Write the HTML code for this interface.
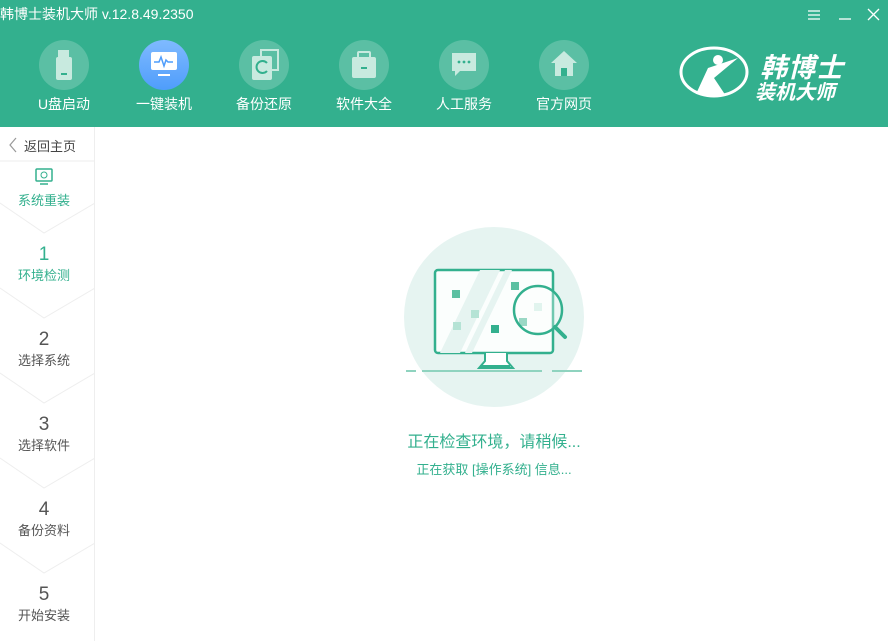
<!DOCTYPE html>
<html><head><meta charset="utf-8"><style>
*{margin:0;padding:0;box-sizing:border-box}
body{width:888px;height:641px;overflow:hidden;background:#fff;font-family:"Liberation Sans","Noto Sans CJK SC",sans-serif;position:relative}
.hd{position:absolute;left:0;top:0;width:888px;height:127px;background:#33b08e}
.title{position:absolute;left:0;top:4px;color:#fff;font-size:14px}
.nav{position:absolute;top:40px;width:100px;text-align:center;color:#fff;font-size:14px}
.nav .c{width:50px;height:50px;border-radius:50%;background:rgba(255,255,255,.2);margin:0 auto;position:relative}
.nav .t{margin-top:4px}
.side{position:absolute;left:0;top:127px;width:95px;height:514px;background:#fff;border-right:1px solid #eee}
.st{position:absolute;left:0;width:88px;text-align:center;color:#555;font-size:13px}
.st .n{font-size:19px;line-height:20px}
</style></head><body>
<div class="hd">
<div class="title">韩博士装机大师 v.12.8.49.2350</div>
<svg style="position:absolute;left:806px;top:8px" width="80" height="14"><g stroke="#fff" stroke-width="1.3" fill="none"><path d="M2 3h12M2 7h12M2 11h12"/><path d="M33 11h12"/><path d="M62 1l11 11M73 1l-11 11"/></g></svg>
<div class="nav" style="left:14px"><div class="c"><svg width="50" height="50"><rect x="19" y="10" width="11" height="8" fill="#c8eadf"/><rect x="17" y="17" width="16" height="23" rx="2" fill="#c8eadf"/><rect x="22" y="33" width="6" height="2" fill="#33b08e"/></svg></div><div class="t">U盘启动</div></div>
<div class="nav" style="left:114px"><div class="c" style="background:linear-gradient(#7fbaff,#4f9dfb)"><svg width="50" height="50"><rect x="12" y="12" width="26" height="18" rx="2" fill="#fff"/><path d="M15 22h5l2-5 3 9 2-6 2 2h5" stroke="#4f9dfb" stroke-width="1.5" fill="none"/><rect x="19" y="34" width="12" height="2" fill="#fff"/></svg></div><div class="t">一键装机</div></div>
<div class="nav" style="left:214px"><div class="c"><svg width="50" height="50"><rect x="22" y="10" width="17" height="20" fill="none" stroke="#c8eadf" stroke-width="2"/><rect x="13" y="16" width="20" height="24" rx="2" fill="#c8eadf"/><path d="M28 23a6 6 0 1 0 0 8" stroke="#33b08e" stroke-width="2" fill="none"/></svg></div><div class="t">备份还原</div></div>
<div class="nav" style="left:314px"><div class="c"><svg width="50" height="50"><rect x="19" y="12" width="12" height="6" rx="1" fill="none" stroke="#c8eadf" stroke-width="2"/><rect x="13" y="17" width="24" height="21" rx="2" fill="#c8eadf"/><rect x="22" y="27" width="6" height="2" fill="#33b08e"/></svg></div><div class="t">软件大全</div></div>
<div class="nav" style="left:414px"><div class="c"><svg width="50" height="50"><path d="M13 13h24v18H21l-5 5v-5h-3z" fill="#c8eadf"/><circle cx="20" cy="22" r="1.4" fill="#33b08e"/><circle cx="25" cy="22" r="1.4" fill="#33b08e"/><circle cx="30" cy="22" r="1.4" fill="#33b08e"/></svg></div><div class="t">人工服务</div></div>
<div class="nav" style="left:514px"><div class="c"><svg width="50" height="50"><path d="M25 11l-13 12h4v13h18V23h4z" fill="#c8eadf"/><rect x="22" y="28" width="6" height="8" fill="#33b08e"/></svg></div><div class="t">官方网页</div></div>
<svg style="position:absolute;left:678px;top:44px" width="80" height="56"><ellipse cx="36" cy="28" rx="33" ry="24" fill="none" stroke="#fff" stroke-width="3"/><circle cx="40" cy="16" r="5" fill="#fff"/><path d="M18 50 L30 24 L60 14 L36 34 L48 52 Z" fill="#fff"/></svg>
<div style="position:absolute;left:760px;top:46px;color:#fff;font-size:27px;font-style:italic;font-weight:bold;letter-spacing:1px">韩博士</div>
<div style="position:absolute;left:755px;top:76px;color:#fff;font-size:20px;font-style:italic;font-weight:bold">装机大师</div>
</div>
<div class="side">
<svg style="position:absolute;left:0;top:0" width="95" height="514"><g stroke="#eee" fill="none"><path d="M0 34h95"/><path d="M0 76L44 106L95 76M0 161L44 191L95 161M0 246L44 276L95 246M0 331L44 361L95 331M0 416L44 446L95 416"/></g><path d="M16 11l-6 7 6 7" stroke="#999" fill="none" stroke-width="1.2"/><rect x="36" y="42" width="16" height="12" rx="1" fill="none" stroke="#33b08e" stroke-width="1.5"/><path d="M40 57h8" stroke="#33b08e" stroke-width="1.5"/><circle cx="44" cy="48" r="3" fill="none" stroke="#33b08e"/></svg>
<div style="position:absolute;left:24px;top:9px;font-size:13px;color:#444">返回主页</div>
<div class="st" style="top:63px;left:0;color:#33b08e">系统重装</div>
<div class="st" style="top:118px;color:#33b08e"><div class="n">1</div>环境检测</div>
<div class="st" style="top:203px"><div class="n">2</div>选择系统</div>
<div class="st" style="top:288px"><div class="n">3</div>选择软件</div>
<div class="st" style="top:373px"><div class="n">4</div>备份资料</div>
<div class="st" style="top:458px"><div class="n">5</div>开始安装</div>
</div>
<svg style="position:absolute;left:400px;top:225px" width="190" height="185">
<circle cx="94" cy="92" r="90" fill="#e6f4f1"/>
<rect x="35" y="45" width="118" height="83" rx="3" fill="#fbfefd" stroke="#33b08e" stroke-width="2.5"/>
<path d="M80 45L40 128H60L100 45ZM105 45L65 128H72L112 45Z" fill="#e6f4f1"/>
<path d="M85 128v8l-6 7h34l-6-7v-8" fill="#fff" stroke="#33b08e" stroke-width="2"/>
<rect x="80" y="140" width="30" height="4" fill="#33b08e"/>
<path d="M6 146h10M22 146h120M152 146h30" stroke="#8fd3bf" stroke-width="2"/>
<rect x="52" y="65" width="8" height="8" fill="#5cc0a2"/><rect x="71" y="85" width="8" height="8" fill="#b5e3d5"/><rect x="53" y="97" width="8" height="8" fill="#b5e3d5"/><rect x="91" y="100" width="8" height="8" fill="#33b08e"/><rect x="111" y="57" width="8" height="8" fill="#5cc0a2"/><rect x="134" y="78" width="8" height="8" fill="#d5efe7"/><rect x="119" y="93" width="8" height="8" fill="#70c8ad"/>
<circle cx="138" cy="85" r="24" fill="rgba(255,255,255,.3)" stroke="#33b08e" stroke-width="2.5"/>
<path d="M155 102l10 10" stroke="#33b08e" stroke-width="4" stroke-linecap="round"/>
</svg>
<div style="position:absolute;left:394px;top:428px;width:200px;text-align:center;color:#33b08e;font-size:16px">正在检查环境，请稍候...</div>
<div style="position:absolute;left:394px;top:459px;width:200px;text-align:center;color:#33b08e;font-size:13px">正在获取 [操作系统] 信息...</div>
</body></html>
